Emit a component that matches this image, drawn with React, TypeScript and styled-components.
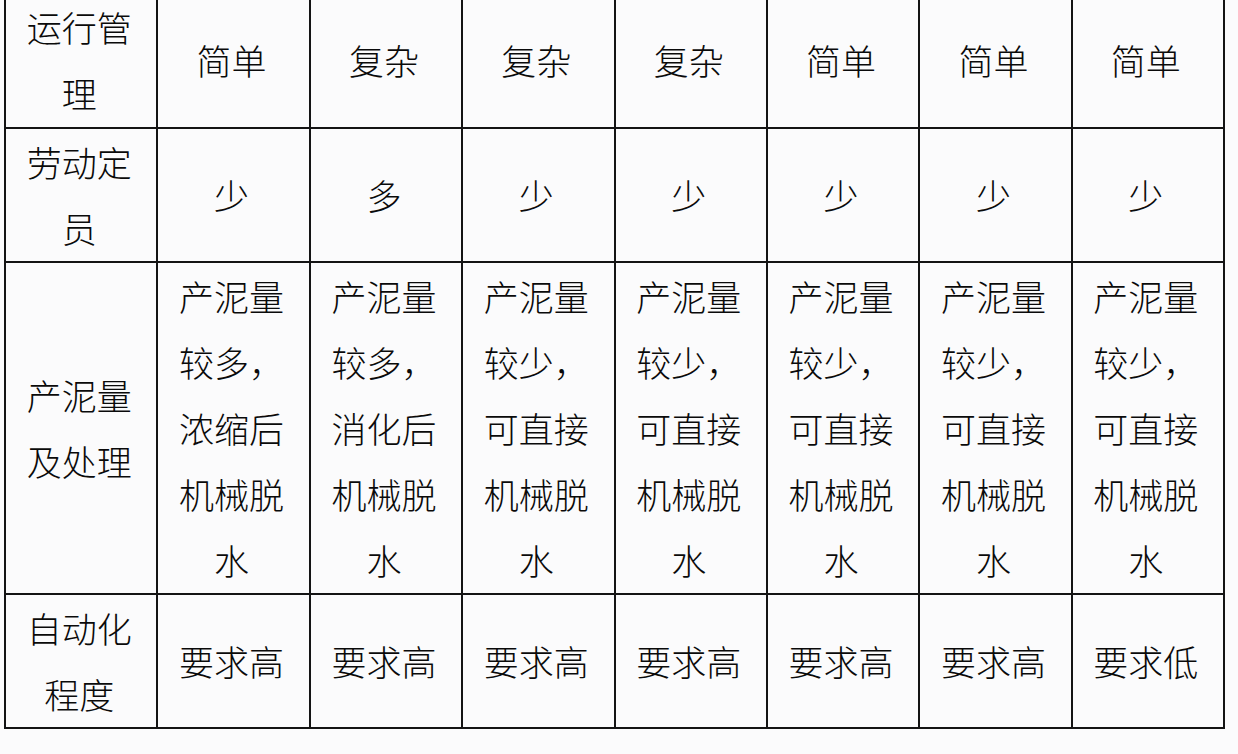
import React from 'react'
import styled, { createGlobalStyle } from 'styled-components'

const GlobalStyle = createGlobalStyle`
    html, body {
        margin: 0;
        padding: 0;
        background: #fbfbfc;
    }
    body {
        font-family: "Noto Sans CJK SC", "Noto Sans", sans-serif;
        color: #0a0a0a;
        overflow: hidden;
    }
`

const Page = styled.div`
    width: 1238px;
    height: 754px;
    padding-left: 4px;
    box-sizing: border-box;
    overflow: hidden;
`

const Table = styled.table`
    margin-top: -9px;
    width: 1221px;
    table-layout: fixed;
    border-collapse: collapse;
`

const Row = styled.tr<{ $height: number }>`
    height: ${p => p.$height}px;
`

const Cell = styled.td`
    border: 2px solid #141414;
    padding: 0 20px 0 16px;
    text-align: center;
    vertical-align: middle;
    font-size: 35px;
    line-height: 66px;
    font-weight: 300;
    word-break: break-all;
`

const ROWS: { label: string; height: number; cells: string[] }[] = [
    {
        label: '运行管理',
        height: 136,
        cells: ['简单', '复杂', '复杂', '复杂', '简单', '简单', '简单']
    },
    {
        label: '劳动定员',
        height: 134,
        cells: ['少', '多', '少', '少', '少', '少', '少']
    },
    {
        label: '产泥量及处理',
        height: 331,
        cells: [
            '产泥量较多，浓缩后机械脱水',
            '产泥量较多，消化后机械脱水',
            '产泥量较少，可直接机械脱水',
            '产泥量较少，可直接机械脱水',
            '产泥量较少，可直接机械脱水',
            '产泥量较少，可直接机械脱水',
            '产泥量较少，可直接机械脱水'
        ]
    },
    {
        label: '自动化程度',
        height: 133,
        cells: ['要求高', '要求高', '要求高', '要求高', '要求高', '要求高', '要求低']
    }
]

const App = () => {
    return (
        <>
            <GlobalStyle />
            <Page>
                <Table>
                    <tbody>
                        {ROWS.map(r => (
                            <Row key={r.label} $height={r.height}>
                                <Cell>{r.label}</Cell>
                                {r.cells.map((c, i) => <Cell key={i}>{c}</Cell>)}
                            </Row>
                        ))}
                    </tbody>
                </Table>
            </Page>
        </>
    )
}

export default App
